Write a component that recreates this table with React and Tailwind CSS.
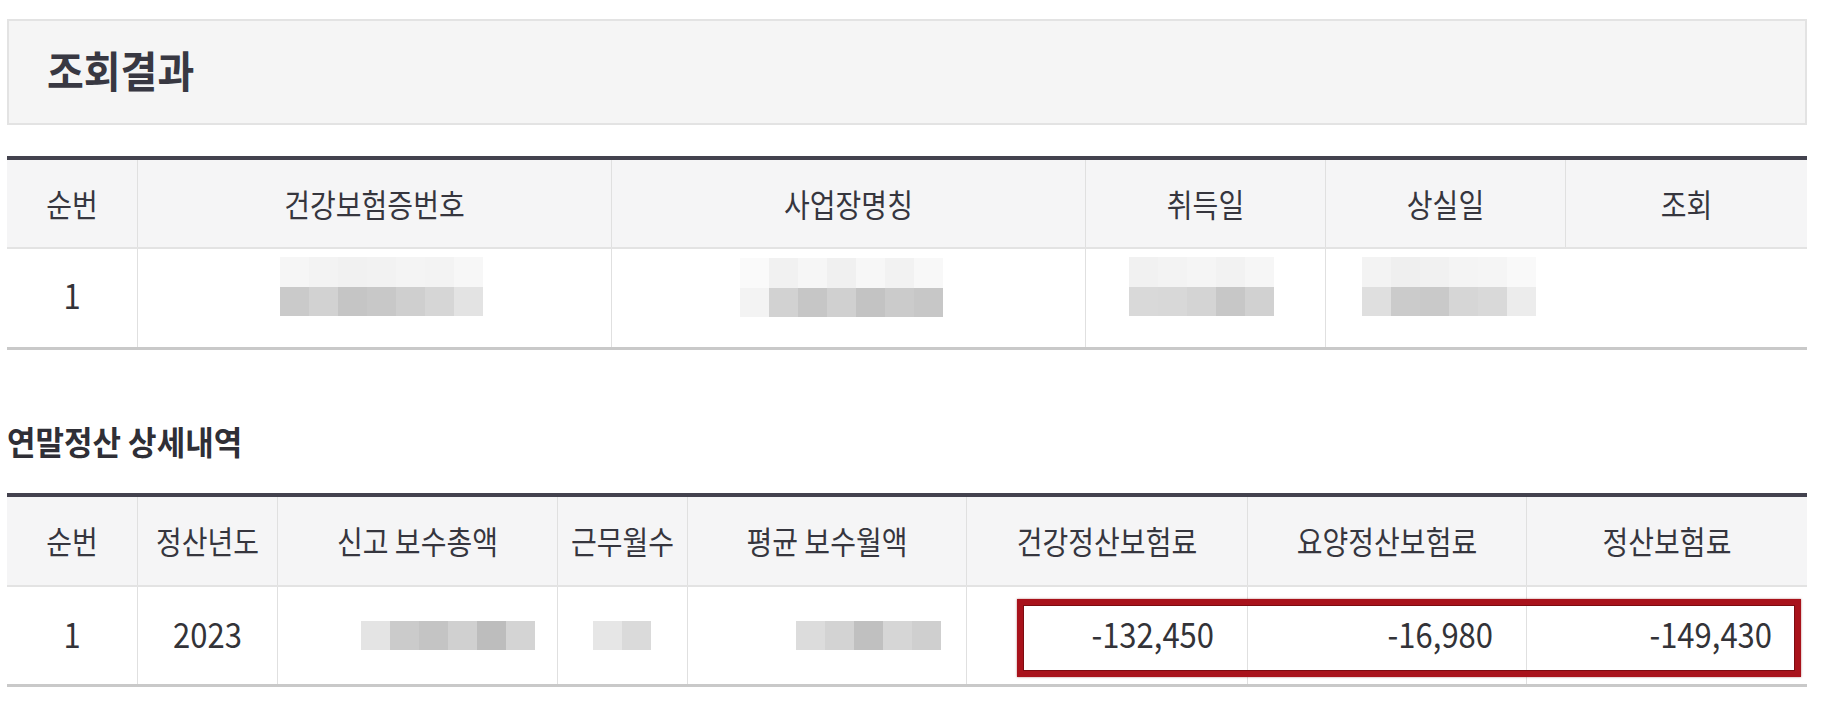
import React from "react";

const light1 = ["#f6f6f6", "#f3f3f3", "#f1f1f1", "#f2f2f2", "#f4f4f4", "#f3f3f3", "#f7f7f7"];

function Mosaic({ top, bottom }) {
  return (
    <div className="flex flex-col">
      {top && (
        <div className="flex">
          {top.map((c, i) => (
            <div key={i} className="w-[29px] h-[30px]" style={{ background: c }} />
          ))}
        </div>
      )}
      <div className="flex">
        {bottom.map((c, i) => (
          <div key={i} className="w-[29px] h-[29px]" style={{ background: c }} />
        ))}
      </div>
    </div>
  );
}

function HeadCell({ children, first }) {
  return (
    <div
      className={
        "flex items-center justify-center text-[28px] text-[#36363e] " +
        (first ? "" : "border-l border-[#e0e0e0]")
      }
    >
      <span className="inline-block scale-y-[1.12]">{children}</span>
    </div>
  );
}

function Num({ children }) {
  return <span className="inline-block scale-y-[1.12]">{children}</span>;
}

export default function App() {
  return (
    <div
      className="w-[1822px] h-[702px] bg-white pl-[7px] pt-[19px] overflow-hidden"
      style={{ fontFamily: '"Noto Sans CJK KR", "Noto Sans", sans-serif' }}
    >
      <div className="w-[1800px]">
        <div className="h-[106px] bg-[#f5f5f5] border-2 border-[#e3e3e3] flex items-center pl-[38px] pb-[5px]">
          <h2 className="text-[40px] font-bold text-[#383842] leading-none scale-y-[1.08]">조회결과</h2>
        </div>

        {/* 조회 결과 */}
        <div className="mt-[31px] border-t-4 border-t-[#43424e] border-b-[3px] border-b-[#c9c9c9]">
          <div className="grid grid-cols-[130px_474px_474px_240px_240px_242px] h-[89px] bg-[#f5f5f6] border-b-2 border-[#e3e3e3]">
            <HeadCell first>순번</HeadCell>
            <HeadCell>건강보험증번호</HeadCell>
            <HeadCell>사업장명칭</HeadCell>
            <HeadCell>취득일</HeadCell>
            <HeadCell>상실일</HeadCell>
            <HeadCell>조회</HeadCell>
          </div>
          <div className="grid grid-cols-[130px_474px_474px_240px_240px_242px] h-[98px] text-[#333338]">
            <div className="flex items-center justify-center text-[31px] pb-[7px]">
              <Num>1</Num>
            </div>
            <div className="border-l border-[#e0e0e0] pl-[142px] pt-[8px]">
              <Mosaic
                top={light1}
                bottom={["#cacaca", "#d2d2d2", "#c5c5c5", "#c8c8c8", "#cfcfcf", "#d6d6d6", "#e3e3e3"]}
              />
            </div>
            <div className="border-l border-[#e0e0e0] pl-[128px] pt-[9px]">
              <Mosaic
                top={["#fafafa", "#f1f1f1", "#f6f6f6", "#f0f0f0", "#f7f7f7", "#f2f2f2", "#f8f8f8"]}
                bottom={["#f3f3f3", "#d2d2d2", "#c6c6c6", "#d0d0d0", "#c3c3c3", "#cbcbcb", "#c7c7c7"]}
              />
            </div>
            <div className="border-l border-[#e0e0e0] pl-[43px] pt-[8px]">
              <Mosaic
                top={["#f1f1f1", "#f3f3f3", "#f5f5f5", "#f2f2f2", "#f6f6f6"]}
                bottom={["#d9d9d9", "#d8d8d8", "#d4d4d4", "#c7c7c7", "#d1d1d1"]}
              />
            </div>
            <div className="border-l border-[#e0e0e0] pl-[36px] pt-[8px]">
              <Mosaic
                top={["#f3f3f3", "#efefef", "#f1f1f1", "#f4f4f4", "#f5f5f5", "#f9f9f9"]}
                bottom={["#dfdfdf", "#cbcbcb", "#c9c9c9", "#d6d6d6", "#d9d9d9", "#ececec"]}
              />
            </div>
            <div />
          </div>
        </div>

        <h3 className="mt-[71px] h-[40px] leading-[40px] text-[31px] font-bold text-[#2f2f36] scale-y-[1.06] origin-left">
          연말정산 상세내역
        </h3>

        {/* 연말정산 상세내역 */}
        <div className="mt-[32px] border-t-4 border-t-[#43424e] border-b-[3px] border-b-[#c9c9c9]">
          <div className="grid grid-cols-[130px_140px_280px_130px_279px_281px_279px_281px] h-[90px] bg-[#f5f5f6] border-b-2 border-[#e3e3e3]">
            <HeadCell first>순번</HeadCell>
            <HeadCell>정산년도</HeadCell>
            <HeadCell>신고 보수총액</HeadCell>
            <HeadCell>근무월수</HeadCell>
            <HeadCell>평균 보수월액</HeadCell>
            <HeadCell>건강정산보험료</HeadCell>
            <HeadCell>요양정산보험료</HeadCell>
            <HeadCell>정산보험료</HeadCell>
          </div>
          <div className="relative grid grid-cols-[130px_140px_280px_130px_279px_281px_279px_281px] h-[97px] text-[31px] text-[#333338]">
            <div className="flex items-center justify-center pb-[5px]">
              <Num>1</Num>
            </div>
            <div className="border-l border-[#e0e0e0] flex items-center justify-center pb-[5px]">
              <Num>2023</Num>
            </div>
            <div className="border-l border-[#e0e0e0] flex items-center pl-[83px]">
              <Mosaic bottom={["#e4e4e4", "#cbcbcb", "#c4c4c4", "#d0d0d0", "#bdbdbd", "#d4d4d4"]} />
            </div>
            <div className="border-l border-[#e0e0e0] flex items-center pl-[35px]">
              <Mosaic bottom={["#e6e6e6", "#dadada"]} />
            </div>
            <div className="border-l border-[#e0e0e0] flex items-center pl-[108px]">
              <Mosaic bottom={["#dcdcdc", "#d3d3d3", "#c0c0c0", "#d6d6d6", "#cfcfcf"]} />
            </div>
            <div className="border-l border-[#e0e0e0] flex items-center justify-end pr-[33px] pb-[5px]">
              <Num>-132,450</Num>
            </div>
            <div className="border-l border-[#e0e0e0] flex items-center justify-end pr-[33px] pb-[5px]">
              <Num>-16,980</Num>
            </div>
            <div className="border-l border-[#e0e0e0] flex items-center justify-end pr-[35px] pb-[5px]">
              <Num>-149,430</Num>
            </div>

            <div className="absolute left-[1010px] top-[12px] w-[784px] h-[78px] border-[6px] border-[#a8121b] shadow-[inset_0_0_0_1px_#7c0b10,0_0_2px_rgba(120,0,0,0.5)] pointer-events-none" />
          </div>
        </div>
      </div>
    </div>
  );
}
